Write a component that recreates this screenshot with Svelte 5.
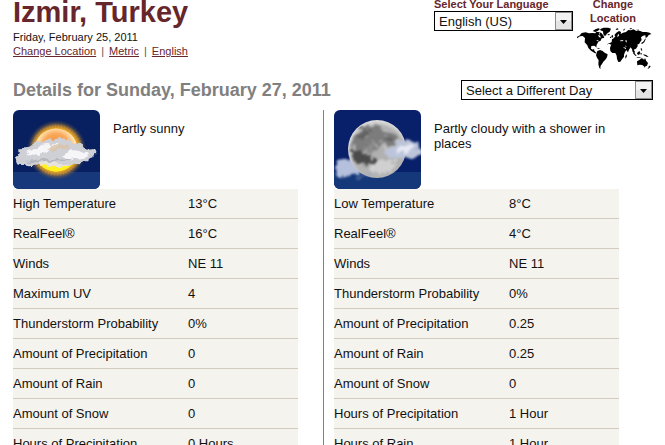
<style>
    :global(body) {
        overflow: hidden;
        background: #fff;
    }
    .page {
        font-family: "Liberation Sans", Arial, sans-serif;
        font-size: 13px;
        line-height: 15px;
        color: #111;
        padding: 0 12px 0 13px;
    }
    a {
        color: #66262c;
    }

    /* top bar */
    .header {
        display: flex;
        justify-content: space-between;
        height: 80px;
    }
    h1 {
        margin: 0 0 6px;
        font-size: 29px;
        line-height: 24px;
        color: #66262c;
    }
    .date, .links {
        font-size: 11px;
        line-height: 14px;
    }
    .links {
        display: flex;
        gap: 5px;
    }
    .links span {
        color: #555;
    }
    .tools {
        display: flex;
        margin-top: -3px;
        font-size: 11px;
        line-height: 14px;
        font-weight: bold;
        color: #66262c;
    }
    .tools label {
        display: block;
    }
    .location {
        display: block;
        width: 80px;
        text-align: center;
        text-decoration: none;
    }
    .location svg {
        display: block;
        width: 76px;
        height: 43px;
        margin: 2px 0 0 auto;
    }

    /* drop-downs */
    .select {
        position: relative;
        height: 20px;
    }
    .language {
        width: 139px;
    }
    .day {
        width: 192px;
    }
    select {
        appearance: none;
        display: block;
        width: 100%;
        height: 20px;
        margin: 0;
        padding: 0 20px 0 4px;
        border: 1px solid #000;
        border-radius: 0;
        background: #fff;
        font-family: inherit;
        font-size: 13px;
        color: #111;
    }
    .select svg {
        position: absolute;
        top: 1px;
        right: 1px;
        width: 17px;
        height: 18px;
        pointer-events: none;
    }

    .title {
        display: flex;
        justify-content: space-between;
        align-items: center;
    }
    h2 {
        margin: 0;
        font-size: 18px;
        line-height: 20px;
        color: #808080;
    }

    /* day and night columns */
    .periods {
        display: grid;
        grid-template-columns: 1fr 1fr;
        margin: 10px 20px 0 0;
    }
    .period {
        padding-right: 25px;
    }
    .period + .period {
        border-left: 1px solid #808080;
        padding: 0 14px 0 10px;
    }
    .summary {
        display: flex;
        gap: 13px;
    }
    .summary svg {
        flex: none;
        width: 87px;
        height: 79px;
        border-radius: 6px;
    }
    .summary p {
        margin: 11px 0 0;
    }
    table {
        width: 100%;
        border-collapse: collapse;
        background: #f5f3ee;
    }
    th, td {
        height: 29px;
        padding: 0;
        border-bottom: 1px solid #d3cbbd;
        text-align: left;
        font-weight: normal;
    }
    th {
        width: 175px;
    }
</style>

<script>
    let language = 'English (US)';
    let day = 'Select a Different Day';

    const periods = [
        {
            icon: 'sun',
            text: 'Partly sunny',
            rows: [
                ['High Temperature', '13°C'],
                ['RealFeel®', '16°C'],
                ['Winds', 'NE 11'],
                ['Maximum UV', '4'],
                ['Thunderstorm Probability', '0%'],
                ['Amount of Precipitation', '0'],
                ['Amount of Rain', '0'],
                ['Amount of Snow', '0'],
                ['Hours of Precipitation', '0 Hours'],
            ],
        },
        {
            icon: 'moon',
            text: 'Partly cloudy with a shower in places',
            rows: [
                ['Low Temperature', '8°C'],
                ['RealFeel®', '4°C'],
                ['Winds', 'NE 11'],
                ['Thunderstorm Probability', '0%'],
                ['Amount of Precipitation', '0.25'],
                ['Amount of Rain', '0.25'],
                ['Amount of Snow', '0'],
                ['Hours of Precipitation', '1 Hour'],
                ['Hours of Rain', '1 Hour'],
            ],
        },
    ];
</script>

{#snippet arrow()}
    <svg viewBox="0 0 17 18" aria-hidden="true">
        <rect x="0.5" y="0.5" width="16" height="17" fill="#e4e4e4" stroke="#8c8c8c"/>
        <path d="M1 1h15v8H1z" fill="#f3f3f3"/>
        <path d="M5 8h7l-3.5 4z" fill="#000"/>
    </svg>
{/snippet}

{#snippet sun()}
    <svg viewBox="0 0 87 79" aria-hidden="true">
        <defs>
            <radialGradient id="glow">
                <stop offset="0.7" stop-color="#f7ae1c"/>
                <stop offset="0.8" stop-color="#d9982a" stop-opacity="0.8"/>
                <stop offset="0.9" stop-color="#8a6a3a" stop-opacity="0.4"/>
                <stop offset="1" stop-color="#4d4a50" stop-opacity="0"/>
            </radialGradient>
            <radialGradient id="disc" cx="0.5" cy="0.42" r="0.6">
                <stop offset="0" stop-color="#f58a2e"/>
                <stop offset="0.5" stop-color="#f9a85a"/>
                <stop offset="0.72" stop-color="#ffe0ae"/>
                <stop offset="0.85" stop-color="#fff0b8"/>
                <stop offset="1" stop-color="#ffdf3a"/>
            </radialGradient>
            <linearGradient id="low" x1="0" y1="0" x2="0" y2="1">
                <stop offset="0.6" stop-color="#ffd92a" stop-opacity="0"/>
                <stop offset="0.85" stop-color="#fff21e"/>
            </linearGradient>
            <filter id="puff" x="-10%" y="-20%" width="120%" height="140%" color-interpolation-filters="sRGB">
                <feTurbulence type="fractalNoise" baseFrequency="0.14" numOctaves="2" seed="4"/>
                <feDisplacementMap in="SourceGraphic" scale="7" xChannelSelector="R" yChannelSelector="G"/>
                <feGaussianBlur stdDeviation="0.6"/>
            </filter>
        </defs>
        <path d="M0 0h87v79H0z" fill="#08205f"/>
        <path d="M0 62h87v17H0z" fill="#17387a"/>
        <circle cx="43.5" cy="40" r="30" fill="url(#glow)"/>
        <circle cx="43.5" cy="40" r="24" fill="none" stroke="#f3b13a" stroke-width="4" stroke-dasharray="1 2" opacity="0.2"/>
        <circle cx="43" cy="40" r="21.5" fill="url(#disc)"/>
        <circle cx="43" cy="40" r="21.5" fill="url(#low)"/>
        <g filter="url(#puff)">
            <path d="M7 43q-5-5 3-5 6 1 9-2 3-6 10-4 5-4 11-2 6-3 12-1 7 0 10 4 6 1 8 5 6 1 10 0 5 2 2 5 2 5-6 5-4 6-12 5-7 4-14 1-7 4-14 1-7 2-10-2-8 4-15 1-6 1-7-5-3-3 3-6z" fill="#cfd0d6"/>
            <path d="M12 44q5-5 12-5 5-7 13-4 5-4 11-1-4 6-10 4-3 6-10 5-5 5-16 1zM49 46q6-8 17-5 5 3 11 2-4 7-15 5-6 4-13-2z" fill="#f6f6f8"/>
            <path d="M34 38q7-6 13-2 6-4 10 1-5 4-11 3-6 3-12-2z" fill="#d9c3a8" opacity="0.8"/>
            <path d="M12 50q9 2 17-3 7 6 16 1 7 4 15-1-5 6-14 4-9 4-17 0-9 3-17-1z" fill="#a3a5ae" opacity="0.6"/>
            <path d="M25 53q9 1 16-1 8 4 16 1-8 6-16 3-9 3-16-3z" fill="#e9e6dc" opacity="0.9"/>
        </g>
    </svg>
{/snippet}

{#snippet moon()}
    <svg viewBox="0 0 87 79" aria-hidden="true">
        <defs>
            <radialGradient id="ball" cx="0.52" cy="0.55" r="0.52">
                <stop offset="0" stop-color="#b0b0b0"/>
                <stop offset="0.85" stop-color="#b4b4b4"/>
                <stop offset="1" stop-color="#d8d8d8"/>
            </radialGradient>
            <filter id="crater" x="-20%" y="-20%" width="140%" height="140%" color-interpolation-filters="sRGB">
                <feTurbulence type="fractalNoise" baseFrequency="0.2" numOctaves="3" seed="9"/>
                <feDisplacementMap in="SourceGraphic" scale="12" xChannelSelector="R" yChannelSelector="G"/>
                <feGaussianBlur stdDeviation="0.8"/>
            </filter>
            <filter id="wisp" x="-10%" y="-20%" width="120%" height="140%" color-interpolation-filters="sRGB">
                <feTurbulence type="fractalNoise" baseFrequency="0.12" numOctaves="3" seed="2"/>
                <feDisplacementMap in="SourceGraphic" scale="9" xChannelSelector="R" yChannelSelector="G"/>
                <feGaussianBlur stdDeviation="0.9"/>
            </filter>
            <clipPath id="edge"><circle cx="43" cy="39" r="28"/></clipPath>
        </defs>
        <path d="M0 0h87v79H0z" fill="#08206a"/>
        <path d="M0 62h87v17H0z" fill="#143879"/>
        <path d="M2 51q9-4 20-1l12 10q-8 6-18 6-9 2-14-2 3-6 0-13z" fill="#b4c0dc" filter="url(#wisp)"/>
        <circle cx="43" cy="39" r="29" fill="url(#ball)"/>
        <g clip-path="url(#edge)">
            <g filter="url(#crater)">
                <path d="M21 24q6-9 18-9 7 1 9 7 9-2 13 3 4 8-2 12-7 0-10-5-4 7-12 6-10 6-16 2-4-8 0-16z" fill="#7c7c7c"/>
                <path d="M17 42q7-3 11 2 5-1 8 3 5 0 6 6-4 4-9 0-8 2-13-3-4-3-3-8z" fill="#4b4b4b"/>
                <path d="M26 21q8-4 12 1-6 7-14 6zM50 28q5-3 9 1-2 5-8 3z" fill="#636363"/>
                <path d="M30 37q9-3 14 3-5 4-13 2z" fill="#8c8c8c"/>
                <path d="M42 53q7-4 19-3 0 9-9 12-9 3-15-1-5-5 5-8z" fill="#d0d0d0"/>
                <path d="M38 30l5 2-4 3zM30 26l4 1-3 4zM52 37l4 3-5 2z" fill="#c4c4c4"/>
            </g>
        </g>
        <g filter="url(#wisp)">
            <path d="M50 44q4-8 13-9 1-7 9-6 4 3 12 3-1 5 3 11-7 5-16 4-8 2-14 0-5 1-7-3z" fill="#bcc4db"/>
            <path d="M63 40q6-8 19-5-1 6-9 7-5 2-10-2z" fill="#e6e9f3"/>
            <path d="M20 68q12-5 22-5-9 6-22 5z" fill="#8fa0c6" opacity="0.4"/>
        </g>
    </svg>
{/snippet}

{#snippet worldMap()}
    <svg viewBox="18 21 228 129" aria-hidden="true">
        <!-- north america and greenland -->
        <path d="M25 47l7-8 12-2 10 3 10-1 9 1 3-5 9 2-1 7 6-4 7 6 3 8-8 1-3 7-7 3-5 9-1 8-6-5-9 1-1 8 6 3 3-3 1 6 7 8-5 0-12-8-8-8-3-8-8-9 1-13-7-6-8 1-9 6-6 1 9-7z"/>
        <path d="M65 33l8-5 9-3 5 2-6 5-8 4zM88 27l10-4 14 0 8 3-4 9-7 5-7 9-5-6-1-9-8-3zM84 37l6 1 5 6-6 1zM75 83l8 1 5 2-6 0z"/>
        <!-- south america -->
        <path d="M79 93l8-3 8 3 6 5 9 5-2 9-5 7-6 6-4 7-4 5-1 7 3 3-6-3-3-11 1-12-5-8-3-7z"/>
        <!-- europe and asia -->
        <path d="M122 66l1-8 5-3 5-6-3-4 6-7 8-5 6 3-1 6 7-4 9-2 7-6 8 1 7-3 9 5 10-1 9 4 11 0 10 2 5 4-8 3-4 6-5 3-1-8-7 1-6 5 2 8-5 7-3 6-4-1 0 7-5 7-7 3 4 6-2 5-5-4-2-8-4-6-5 7-3 8-4-5-3-9-8-2-6 8-7 4-6-12-6-3-7-1 1-4-6 1-4-5-4 2-4 4z"/>
        <path d="M121 48l4-4 2 8-5 1zM117 51l3-1 0 4-3 0zM110 43l6-1-1 4-5-1zM134 27l6-2 3 3-6 2zM156 30l7-5-4 7zM175 26l6-2 2 3-6 1zM196 29l8 0-1 3-6-1z"/>
        <!-- africa -->
        <path d="M121 73l7-5 10 0 3 4 10-1 6 11 6 5 6-1-7 10-3 8 0 6-6 8-5 7-6 1-4-9-1-10-4-8-9 0-6-6-1-9zM163 108l5-5-1 8-4 5z"/>
        <!-- islands and australia -->
        <path d="M186 96l5 4 6 8-3 0-7-7zM198 99l7-6 3 5-4 7-5-2zM208 99l5 1-3 6zM196 111l10 1 6 2-13-1zM209 85l3 0 2 8-4-2zM211 69l7-5 5-9 1 3-4 9-8 6zM217 103l9 2 7 6-6-1-9-4z"/>
        <path d="M198 124l7-4 6-5 6 1 2 4 3-6 4 9 5 6-3 8-8 3-6-5-8-1-7 2zM219 139l4 0-2 4zM234 137l5 1-3 5-7 5 3-5z"/>
        <!-- inland seas -->
        <path d="M82 45l6 2 1 6-4-1-3-4zM146 62l8-2 4 3-9 1zM163 61l4 0 0 7-3-3zM140 45l3-4 1 6-5 5zM163 75l4 6-3-1zM76 61l5 0 3 3-6-1z" fill="#fff"/>
    </svg>
{/snippet}

<div class="page">
    <div class="header">
        <div>
            <h1>Izmir, Turkey</h1>
            <div class="date">Friday, February 25, 2011</div>
            <div class="links">
                <a href="#location">Change Location</a>
                <span>|</span>
                <a href="#metric">Metric</a>
                <span>|</span>
                <a href="#english">English</a>
            </div>
        </div>
        <div class="tools">
            <div>
                <label for="language">Select Your Language</label>
                <div class="select language">
                    <select id="language" bind:value={language}>
                        <option>English (US)</option>
                    </select>
                    {@render arrow()}
                </div>
            </div>
            <a class="location" href="#change">
                Change<br>Location
                {@render worldMap()}
            </a>
        </div>
    </div>

    <div class="title">
        <h2>Details for Sunday, February 27, 2011</h2>
        <div class="select day">
            <select aria-label="Day" bind:value={day}>
                <option>Select a Different Day</option>
            </select>
            {@render arrow()}
        </div>
    </div>

    <div class="periods">
        {#each periods as period}
            <div class="period">
                <div class="summary">
                    {#if period.icon === 'sun'}
                        {@render sun()}
                    {:else}
                        {@render moon()}
                    {/if}
                    <p>{period.text}</p>
                </div>
                <table>
                    <tbody>
                        {#each period.rows as [name, value]}
                            <tr>
                                <th scope="row">{name}</th>
                                <td>{value}</td>
                            </tr>
                        {/each}
                    </tbody>
                </table>
            </div>
        {/each}
    </div>
</div>
